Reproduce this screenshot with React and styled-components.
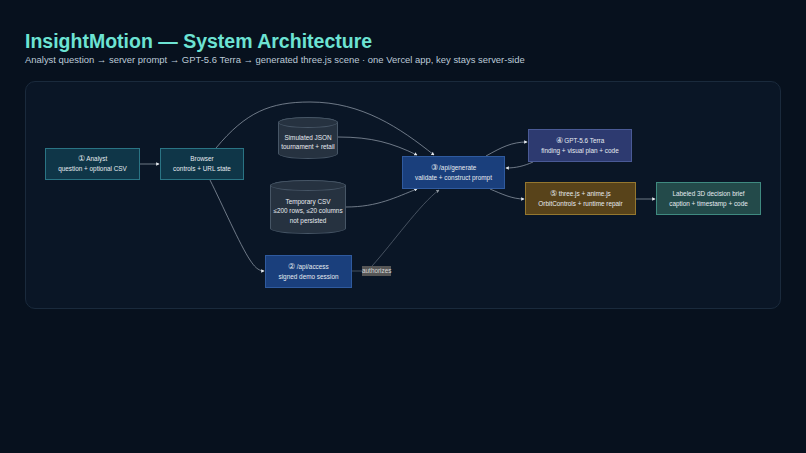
import React from "react";
import styled, { createGlobalStyle } from "styled-components";

const PANEL_X = 25;
const PANEL_Y = 81;

const palette = {
  teal: { bg: "#0f3648", border: "#2a7484" },
  blue: { bg: "#1a3f7c", border: "#2f5a9e" },
  indigo: { bg: "#2d3a70", border: "#4a5a96" },
  amber: { bg: "#58431a", border: "#94772f" },
  green: { bg: "#234a4a", border: "#3f8a80" },
};

const nodes = [
  { x: 45, y: 148, w: 95, h: 32, tone: "teal", num: "①", lines: ["Analyst", "question + optional CSV"] },
  { x: 160, y: 148, w: 84, h: 32, tone: "teal", lines: ["Browser", "controls + URL state"] },
  { x: 265, y: 255, w: 87, h: 33, tone: "blue", num: "②", lines: ["/api/access", "signed demo session"] },
  { x: 402, y: 156, w: 103, h: 33, tone: "blue", num: "③", lines: ["/api/generate", "validate + construct prompt"] },
  { x: 528, y: 129, w: 104, h: 33, tone: "indigo", num: "④", lines: ["GPT-5.6 Terra", "finding + visual plan + code"] },
  { x: 525, y: 182, w: 111, h: 33, tone: "amber", num: "⑤", lines: ["three.js + anime.js", "OrbitControls + runtime repair"] },
  { x: 656, y: 182, w: 105, h: 33, tone: "green", lines: ["Labeled 3D decision brief", "caption + timestamp + code"] },
];

const stores = [
  { x: 278, y: 117, w: 60, h: 42, lines: ["Simulated JSON", "tournament + retail"] },
  { x: 270, y: 180, w: 76, h: 54, lines: ["Temporary CSV", "≤200 rows, ≤20 columns", "not persisted"] },
];

const edges = [
  { d: "M140 164 L159 164" },
  { d: "M216 148 C246 112 270 102 310 102 C362 102 400 128 434 155" },
  { d: "M338 137 C372 137 392 143 417 155" },
  { d: "M346 207 C378 207 396 197 417 189" },
  { d: "M352 271 L362 271", faint: true, open: true },
  { d: "M372 266 C392 244 420 204 439 190", faint: true },
  { d: "M210 180 C222 204 240 245 250 260 C254 266 258 271 264 271" },
  { d: "M486 156 C502 147 512 142 527 142" },
  { d: "M533 162 C524 166 516 168 506 168" },
  { d: "M490 189 C502 194 512 199 524 199" },
  { d: "M636 199 L655 199" },
];

const GlobalStyle = createGlobalStyle`
  html, body {
    margin: 0;
    background: #07111e;
  }
`;

const Page = styled.div`
  width: 806px;
  height: 453px;
  box-sizing: border-box;
  padding: 30px 25px 0;
  font-family: "Liberation Sans", Arial, sans-serif;
  background: #07111e;
  overflow: hidden;
`;

const Title = styled.h1`
  margin: 0;
  font-size: 19.5px;
  line-height: 22px;
  font-weight: 700;
  color: #6de3d3;
`;

const Subtitle = styled.p`
  margin: 1px 0 0;
  font-size: 9.45px;
  line-height: 14px;
  color: #bccad8;
`;

const Canvas = styled.div`
  position: relative;
  margin-top: 14px;
  width: 756px;
  height: 228px;
  box-sizing: border-box;
  background: #0a1626;
  border: 1px solid #1a2a3c;
  border-radius: 10px;
`;

const Edges = styled.svg`
  position: absolute;
  left: -1px;
  top: -1px;
  width: 756px;
  height: 228px;
  fill: none;
  stroke: #99a4b0;
  stroke-width: 0.7;
`;

const Edge = styled.path`
  opacity: ${(p) => (p.$faint ? 0.6 : 1)};
`;

const Node = styled.div`
  position: absolute;
  left: ${(p) => p.$x - PANEL_X - 1}px;
  top: ${(p) => p.$y - PANEL_Y - 1}px;
  width: ${(p) => p.$w}px;
  height: ${(p) => p.$h}px;
  box-sizing: border-box;
  display: flex;
  flex-direction: column;
  align-items: center;
  justify-content: center;
  background: ${(p) => palette[p.$tone].bg};
  border: 1px solid ${(p) => palette[p.$tone].border};
  color: #e6ebf0;
  font-size: 6.4px;
  line-height: 10px;
  white-space: nowrap;
`;

const Numeral = styled.span`
  font-size: 7.6px;
  margin-right: 1.5px;
`;

const Store = styled.div`
  position: absolute;
  left: ${(p) => p.$x - PANEL_X - 1}px;
  top: ${(p) => p.$y - PANEL_Y - 1}px;
  width: ${(p) => p.$w}px;
  height: ${(p) => p.$h}px;
  box-sizing: border-box;
  padding-top: 8px;
  display: flex;
  flex-direction: column;
  align-items: center;
  justify-content: center;
  background: #263240;
  border: 1px solid #475666;
  border-radius: 50% / 5.5px;
  color: #e6ebf0;
  font-size: 6.4px;
  line-height: 9.5px;
  white-space: nowrap;

  &::before {
    content: "";
    position: absolute;
    left: -1px;
    right: -1px;
    top: -1px;
    height: 11px;
    box-sizing: border-box;
    background: #263240;
    border: 1px solid #475666;
    border-radius: 50%;
  }
`;

const EdgeLabel = styled.span`
  position: absolute;
  left: ${362 - PANEL_X - 1}px;
  top: ${266 - PANEL_Y - 1}px;
  width: 29px;
  height: 10px;
  text-align: center;
  background: #565656;
  color: #d8d8d8;
  font-size: 6.4px;
  line-height: 10px;
`;

export default function App() {
  return (
    <Page>
      <GlobalStyle />
      <Title>InsightMotion — System Architecture</Title>
      <Subtitle>
        Analyst question → server prompt → GPT-5.6 Terra → generated three.js scene · one Vercel app, key stays server-side
      </Subtitle>
      <Canvas>
        <Edges viewBox={`${PANEL_X} ${PANEL_Y} 756 228`}>
          <defs>
            <marker id="tip" viewBox="0 0 6 6" refX="5" refY="3" markerWidth="3.4" markerHeight="3.4" markerUnits="userSpaceOnUse" orient="auto">
              <path d="M0 0 L6 3 L0 6 Z" fill="#e8edf2" stroke="none" />
            </marker>
          </defs>
          {edges.map((e) => (
            <Edge key={e.d} d={e.d} $faint={e.faint} markerEnd={e.open ? undefined : "url(#tip)"} />
          ))}
        </Edges>
        {stores.map((s) => (
          <Store key={s.lines[0]} $x={s.x} $y={s.y} $w={s.w} $h={s.h}>
            {s.lines.map((l) => (
              <span key={l}>{l}</span>
            ))}
          </Store>
        ))}
        {nodes.map((n) => (
          <Node key={n.lines[0]} $x={n.x} $y={n.y} $w={n.w} $h={n.h} $tone={n.tone}>
            <span>
              {n.num && <Numeral>{n.num}</Numeral>}
              {n.lines[0]}
            </span>
            <span>{n.lines[1]}</span>
          </Node>
        ))}
        <EdgeLabel>authorizes</EdgeLabel>
      </Canvas>
    </Page>
  );
}
